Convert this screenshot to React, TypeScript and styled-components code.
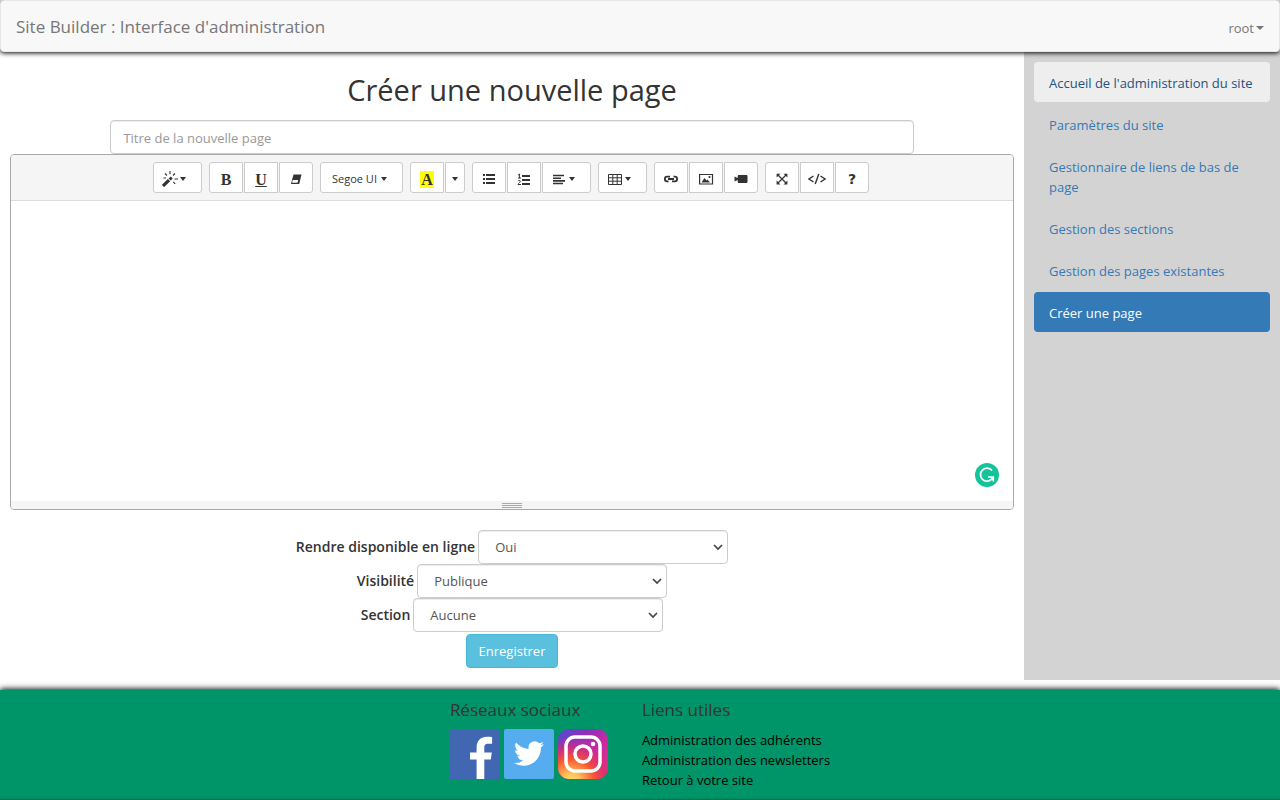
import React from 'react';
import styled, { createGlobalStyle } from 'styled-components';

const GlobalStyle = createGlobalStyle`
  *, *::before, *::after { box-sizing: border-box; }
  body {
    margin: 0;
    background: #fff;
    color: #333;
    font: 13px/20px "Segoe UI", "Open Sans", sans-serif;
  }
  button, input, select { font: inherit; margin: 0; }
  a { text-decoration: none; }
`;

const Page = styled.div`
  display: flex;
  flex-direction: column;
  min-height: 100vh;
`;

const Navbar = styled.header`
  position: relative;
  display: flex;
  justify-content: space-between;
  align-items: center;
  min-height: 52px;
  padding: 0 15px;
  background: #f8f8f8;
  border: 1px solid #e7e7e7;
  border-radius: 4px;
  box-shadow: 0 1px 5px #000;
`;

const Brand = styled.a`
  font-size: 17px;
  color: #777;
  padding-top: 2px;
`;

const UserMenu = styled.button`
  display: flex;
  align-items: center;
  gap: 2px;
  padding: 3px 0 0;
  border: 0;
  background: none;
  color: #777;
`;

const Caret = styled.span<{ $wide?: boolean }>`
  border-top: 4px solid currentColor;
  border-left: ${p => (p.$wide ? 4 : 3)}px solid transparent;
  border-right: ${p => (p.$wide ? 4 : 3)}px solid transparent;
`;

const Body = styled.div`
  display: grid;
  grid-template-columns: 4fr 1fr;
  flex: 1;
`;

const Main = styled.main`
  display: flex;
  flex-direction: column;
  align-items: center;
  padding: 18px 10px 12px;
`;

const Heading = styled.h1`
  margin: 0 0 10px;
  font-size: 29px;
  line-height: 40px;
  font-weight: 400;
`;

const TitleInput = styled.input`
  width: 80%;
  height: 34px;
  padding: 7px 12px 5px;
  border: 1px solid #ccc;
  border-radius: 4px;
  box-shadow: inset 0 1px 1px rgba(0, 0, 0, 0.075);
  color: #555;
  &::placeholder { color: #999; opacity: 1; }
`;

const Editor = styled.section`
  width: 100%;
  margin-bottom: 20px;
  border: 1px solid #a9a9a9;
  border-radius: 4px;
  overflow: hidden;
`;

const Toolbar = styled.div`
  display: flex;
  justify-content: center;
  gap: 7px;
  padding: 7px 2px 7px 0;
  background: #f5f5f5;
  border-bottom: 1px solid #ddd;
`;

const ToolGroup = styled.div`
  display: flex;
  gap: 1px;
`;

const Tool = styled.button<{ $width?: number; $menu?: boolean }>`
  display: flex;
  align-items: center;
  justify-content: ${p => (p.$menu ? 'flex-start' : 'center')};
  gap: 2px;
  width: ${p => p.$width ?? 34}px;
  height: 31px;
  padding: 3px 0 0 ${p => (p.$menu ? 8 : 0)}px;
  border: 1px solid #ccc;
  background: #fff;
  color: #333;
  &:first-child { border-top-left-radius: 3px; border-bottom-left-radius: 3px; }
  &:last-child { border-top-right-radius: 3px; border-bottom-right-radius: 3px; }
`;

const FontTool = styled(Tool)`
  justify-content: center;
  gap: 4px;
  padding: 2px 4px 0 0;
  font-size: 11px;
`;

const Glyph = styled.span<{ $highlight?: boolean; $underline?: boolean }>`
  padding: 0 1px;
  font: 700 16px/17px "Liberation Serif", serif;
  text-decoration: ${p => (p.$underline ? 'underline' : 'none')};
  background: ${p => (p.$highlight ? '#ff0' : 'transparent')};
`;

const Help = styled.span`
  font: 700 14px/16px "DejaVu Sans", sans-serif;
`;

const Canvas = styled.div`
  display: flex;
  justify-content: flex-end;
  align-items: flex-end;
  height: 300px;
  padding: 14px;
`;

const StatusBar = styled.div`
  display: flex;
  flex-direction: column;
  align-items: center;
  gap: 1px;
  height: 8px;
  padding-top: 2px;
  background: #f5f5f5;
`;

const Grip = styled.span`
  width: 20px;
  height: 1px;
  background: #a9a9a9;
`;

const Field = styled.div`
  display: flex;
  align-items: center;
  gap: 3px;
`;

const Label = styled.label`
  font-size: 14px;
  font-weight: 600;
`;

const SelectBox = styled.div`
  display: grid;
  align-items: center;
  width: 250px;
  & > * { grid-area: 1 / 1; }
  & > svg { justify-self: end; margin-right: 4px; pointer-events: none; }
`;

const Select = styled.select`
  appearance: none;
  width: 100%;
  height: 34px;
  padding: 6px 16px;
  border: 1px solid #ccc;
  border-radius: 4px;
  background: #fff;
  color: #555;
  box-shadow: inset 0 1px 1px rgba(0, 0, 0, 0.075);
`;

const SaveButton = styled.button`
  height: 34px;
  margin-top: 2px;
  padding: 0 12px;
  border: 1px solid #46b8da;
  border-radius: 4px;
  background: #5bc0de;
  color: #fff;
`;

const Sidebar = styled.nav`
  display: flex;
  flex-direction: column;
  gap: 2px;
  padding: 10px;
  background: #d3d3d3;
`;

const SideLink = styled.a<{ $state?: 'hover' | 'active' }>`
  padding: 11px 15px 9px;
  border-radius: 4px;
  background: ${p => (p.$state === 'active' ? '#337ab7' : p.$state === 'hover' ? '#eee' : 'transparent')};
  color: ${p => (p.$state === 'active' ? '#fff' : p.$state === 'hover' ? '#23527c' : '#337ab7')};
`;

const Footer = styled.footer`
  display: flex;
  justify-content: center;
  gap: 34px;
  min-height: 110px;
  margin-top: 10px;
  padding: 10px 10px 8px;
  background: #009568;
  box-shadow: 0 -1px 6px #000, inset 0 -3px 2px -2px rgba(0, 0, 0, 0.3);
`;

const FooterTitle = styled.h2`
  margin: 0 0 9px;
  font-size: 17px;
  font-weight: 400;
  line-height: 20px;
`;

const Socials = styled.div`
  display: flex;
  gap: 4px;
`;

const SocialLink = styled.a`
  height: 50px;
`;

const LinkList = styled.div`
  display: flex;
  flex-direction: column;
  padding-top: 1px;
`;

const FooterLink = styled.a`
  color: #000;
`;

const Svg = ({ children }: { children: React.ReactNode }) => (
  <svg width="16" height="16" viewBox="0 0 16 16" fill="none" stroke="currentColor" aria-hidden="true">
    {children}
  </svg>
);

const WandIcon = () => (
  <Svg>
    <path d="M1 15 7 9.200" strokeWidth="3.200" />
    <path d="m7.600 8.600 2.200-2.100" strokeWidth="2.800" />
    <path d="M8 0v3.200M3 2.500l2 2M13 2.500l-2 2M12.500 8H16M11.200 10.800l2 2M1.500 7H4" strokeWidth="1.100" />
  </Svg>
);
const EraserIcon = () => (
  <Svg>
    <path d="M5.500 3.500h8l-2.300 9.500H3z" fill="currentColor" stroke="none" />
    <path d="M4.800 9h5.400l-.7 2.800H4.900c-.6 0-.8-.4-.7-1z" fill="#fff" stroke="none" />
  </Svg>
);
const ListIcon = () => (
  <Svg>
    <path d="M2 4h2M2 8h2M2 12h2M5 4h9M5 8h9M5 12h9" strokeWidth="2" />
  </Svg>
);
const OrderedIcon = () => (
  <Svg>
    <path d="M6 5h8M6 9h8M6 13h8" strokeWidth="2" />
    <path d="M2 4.200 3.400 3v4M2 7h3M2 10.200c.4-1.200 2.400-1 2.300.2C4.200 11.500 2 12.500 2 13.500h3" />
  </Svg>
);
const AlignIcon = () => (
  <Svg>
    <path d="M2 4.500h11M2 7.200h8M2 9.900h12M2 12.500h10" strokeWidth="1.600" />
  </Svg>
);
const TableIcon = () => (
  <Svg>
    <path d="M1.500 3.500h13v10h-13zM1.500 6.800h13M1.500 10.200h13M5.800 3.500v10M10.200 3.500v10" />
  </Svg>
);
const LinkIcon = () => (
  <Svg>
    <path d="M7 5.700H4.200a2.300 2.300 0 0 0 0 4.600H5.500M9 10.300h2.800a2.300 2.300 0 0 0 0-4.600H10.500M5 8h6" strokeWidth="1.800" />
  </Svg>
);
const PictureIcon = () => (
  <Svg>
    <path d="M1.600 3.500h12.900v9.500H1.600z" strokeWidth="1.200" />
    <path d="m3.500 11.500 3-4.500 2 2.500 1-1 2.500 3z" fill="currentColor" stroke="none" />
    <circle cx="11.500" cy="6" r="1.100" fill="currentColor" stroke="none" />
  </Svg>
);
const VideoIcon = () => (
  <Svg>
    <path d="M6 4h7.200c.8 0 1.300.5 1.300 1.300v5.400c0 .8-.5 1.300-1.300 1.300H6c-.8 0-1.300-.5-1.300-1.300V9L2 10.300c-.4.200-.500 0-.500-.300V6c0-.3.1-.5.5-.3L4.700 7V5.300C4.700 4.500 5.200 4 6 4z" fill="currentColor" stroke="none" />
  </Svg>
);
const ExpandIcon = () => (
  <Svg>
    <path d="m4 4 8 8M12 4l-8 8" strokeWidth="1.200" />
    <path d="M2.600 2.800h3.800L2.600 6.600zM13.400 2.800v3.800L9.600 2.800zM2.600 13.400V9.600l3.800 3.800zM13.400 13.400H9.600l3.800-3.800z" fill="currentColor" stroke="none" />
  </Svg>
);
const CodeIcon = () => (
  <svg width="18" height="16" viewBox="0 0 18 16" fill="none" stroke="currentColor" strokeWidth="1.400" aria-hidden="true">
    <path d="M5.500 5 1 8l4.500 3M12.500 5 17 8l-4.500 3M10.800 3 7.200 13" />
  </svg>
);

const Chevron = () => (
  <svg width="12" height="12" viewBox="0 0 12 12" fill="none" stroke="#444" strokeWidth="1.700" aria-hidden="true">
    <path d="m2 4 4 4 4-4" />
  </svg>
);

const GrammarBadge = () => (
  <svg width="24" height="24" viewBox="0 0 24 24" fill="none" aria-label="Grammarly">
    <circle cx="12" cy="12" r="12" fill="#15c39a" />
    <path d="M17 7.500A6.500 6.500 0 1 0 18 14.200M13 14h5.300v4.500" stroke="#fff" strokeWidth="1.700" />
  </svg>
);

const FacebookLogo = () => (
  <svg width="50" height="50" viewBox="0 0 50 50">
    <rect width="50" height="50" fill="#4267b2" />
    <path d="M26.600 50V30.600H20V23.500h6.600v-5c0-7 4.200-10.800 10.500-10.800 2 0 3.800.1 5 .3v6.700h-3.900c-3.200 0-3.900 1.600-3.900 3.900v4.900h7.500l-1 7.100h-6.500V50z" fill="#fff" />
  </svg>
);
const TwitterLogo = () => (
  <svg width="50" height="50" viewBox="0 0 50 50">
    <rect width="50" height="50" rx="2" fill="#55acee" />
    <path
      transform="translate(10 9.500) scale(1.250)"
      fill="#fff"
      d="M23.953 4.570a10 10 0 01-2.825.775 4.958 4.958 0 002.163-2.723c-.951.555-2.005.959-3.127 1.184a4.920 4.920 0 00-8.384 4.482C7.690 8.095 4.067 6.130 1.640 3.162a4.822 4.822 0 00-.666 2.475c0 1.710.870 3.213 2.188 4.096a4.904 4.904 0 01-2.228-.616v.060a4.923 4.923 0 003.946 4.827 4.996 4.996 0 01-2.212.085 4.936 4.936 0 004.604 3.417 9.867 9.867 0 01-6.102 2.105c-.390 0-.779-.023-1.170-.067a13.995 13.995 0 007.557 2.209c9.053 0 13.998-7.496 13.998-13.985 0-.210 0-.420-.015-.630A9.935 9.935 0 0024 4.590z"
    />
  </svg>
);
const InstagramLogo = () => (
  <svg width="50" height="50" viewBox="0 0 50 50" fill="none">
    <defs>
      <linearGradient id="igBase" x1="0" y1="0" x2="1" y2="1">
        <stop offset="0" stopColor="#4f4fd0" />
        <stop offset="0.300" stopColor="#8a2fc0" />
        <stop offset="0.600" stopColor="#c82aa0" />
        <stop offset="1" stopColor="#e8317a" />
      </linearGradient>
      <radialGradient id="igGlow" cx="0.270" cy="1.050" r="0.900">
        <stop offset="0" stopColor="#ffdd70" />
        <stop offset="0.180" stopColor="#fdc45a" />
        <stop offset="0.500" stopColor="#f9572f" />
        <stop offset="0.750" stopColor="#e0306a" stopOpacity="0.700" />
        <stop offset="1" stopColor="#c82aa0" stopOpacity="0" />
      </radialGradient>
    </defs>
    <rect width="50" height="50" rx="11" fill="url(#igBase)" />
    <rect width="50" height="50" rx="11" fill="url(#igGlow)" />
    <rect x="8" y="8" width="34" height="34" rx="9" stroke="#fff" strokeWidth="3.500" />
    <circle cx="25" cy="25" r="8" stroke="#fff" strokeWidth="3.500" />
    <circle cx="35" cy="15" r="2.300" fill="#fff" />
  </svg>
);

const sideLinks: { text: string; state?: 'hover' | 'active' }[] = [
  { text: "Accueil de l'administration du site", state: 'hover' },
  { text: 'Paramètres du site' },
  { text: 'Gestionnaire de liens de bas de page' },
  { text: 'Gestion des sections' },
  { text: 'Gestion des pages existantes' },
  { text: 'Créer une page', state: 'active' },
];

const fields = [
  { id: 'online', label: 'Rendre disponible en ligne', value: 'Oui' },
  { id: 'visibility', label: 'Visibilité', value: 'Publique' },
  { id: 'section', label: 'Section', value: 'Aucune' },
];

export default function App() {
  return (
    <Page>
      <GlobalStyle />
      <Navbar>
        <Brand href="#">Site Builder : Interface d'administration</Brand>
        <UserMenu>root<Caret $wide /></UserMenu>
      </Navbar>
      <Body>
        <Main>
          <Heading>Créer une nouvelle page</Heading>
          <TitleInput type="text" aria-label="Titre" placeholder="Titre de la nouvelle page" />
          <Editor>
            <Toolbar>
              <ToolGroup>
                <Tool $menu $width={49} aria-label="Style"><WandIcon /><Caret /></Tool>
              </ToolGroup>
              <ToolGroup>
                <Tool><Glyph>B</Glyph></Tool>
                <Tool><Glyph $underline>U</Glyph></Tool>
                <Tool aria-label="Effacer la mise en forme"><EraserIcon /></Tool>
              </ToolGroup>
              <ToolGroup>
                <FontTool $width={83}>Segoe UI<Caret /></FontTool>
              </ToolGroup>
              <ToolGroup>
                <Tool><Glyph $highlight>A</Glyph></Tool>
                <Tool $width={20} aria-label="Couleurs"><Caret /></Tool>
              </ToolGroup>
              <ToolGroup>
                <Tool aria-label="Liste à puces"><ListIcon /></Tool>
                <Tool aria-label="Liste numérotée"><OrderedIcon /></Tool>
                <Tool $menu $width={49} aria-label="Paragraphe"><AlignIcon /><Caret /></Tool>
              </ToolGroup>
              <ToolGroup>
                <Tool $menu $width={49} aria-label="Tableau"><TableIcon /><Caret /></Tool>
              </ToolGroup>
              <ToolGroup>
                <Tool aria-label="Lien"><LinkIcon /></Tool>
                <Tool aria-label="Image"><PictureIcon /></Tool>
                <Tool aria-label="Vidéo"><VideoIcon /></Tool>
              </ToolGroup>
              <ToolGroup>
                <Tool aria-label="Plein écran"><ExpandIcon /></Tool>
                <Tool aria-label="Code source"><CodeIcon /></Tool>
                <Tool><Help>?</Help></Tool>
              </ToolGroup>
            </Toolbar>
            <Canvas><GrammarBadge /></Canvas>
            <StatusBar><Grip /><Grip /><Grip /></StatusBar>
          </Editor>
          {fields.map(f => (
            <Field key={f.id}>
              <Label htmlFor={f.id}>{f.label}</Label>
              <SelectBox>
                <Select id={f.id}><option>{f.value}</option></Select>
                <Chevron />
              </SelectBox>
            </Field>
          ))}
          <SaveButton>Enregistrer</SaveButton>
        </Main>
        <Sidebar>
          {sideLinks.map(l => (
            <SideLink key={l.text} href="#" $state={l.state}>{l.text}</SideLink>
          ))}
        </Sidebar>
      </Body>
      <Footer>
        <div>
          <FooterTitle>Réseaux sociaux</FooterTitle>
          <Socials>
            <SocialLink href="#" aria-label="Facebook"><FacebookLogo /></SocialLink>
            <SocialLink href="#" aria-label="Twitter"><TwitterLogo /></SocialLink>
            <SocialLink href="#" aria-label="Instagram"><InstagramLogo /></SocialLink>
          </Socials>
        </div>
        <div>
          <FooterTitle>Liens utiles</FooterTitle>
          <LinkList>
            <FooterLink href="#">Administration des adhérents</FooterLink>
            <FooterLink href="#">Administration des newsletters</FooterLink>
            <FooterLink href="#">Retour à votre site</FooterLink>
          </LinkList>
        </div>
      </Footer>
    </Page>
  );
}
